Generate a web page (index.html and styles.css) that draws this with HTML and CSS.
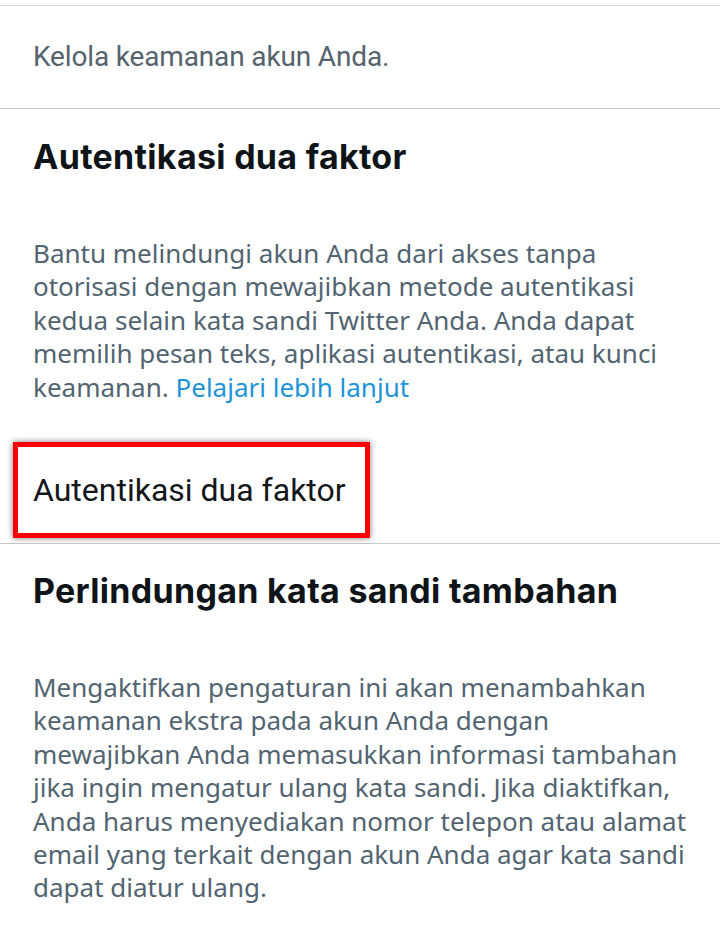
FILE: index.html
```html
<!DOCTYPE html>
<html lang="id">
<head>
<meta charset="utf-8">
<link rel="stylesheet" href="styles.css">
</head>
<body>
<div class="page">
  <div class="intro">
    <p class="intro-text">Kelola keamanan akun Anda.</p>
  </div>
  <section class="section">
    <h2 class="heading">Autentikasi dua faktor</h2>
    <p class="desc">Bantu melindungi akun Anda dari akses tanpa<br>otorisasi dengan mewajibkan metode autentikasi<br>kedua selain kata sandi Twitter Anda. Anda dapat<br>memilih pesan teks, aplikasi autentikasi, atau kunci<br>keamanan. <a class="link" href="#">Pelajari lebih lanjut</a></p>
    <div class="item-row">
      <div class="item-box">Autentikasi dua faktor</div>
    </div>
  </section>
  <section class="section last">
    <h2 class="heading">Perlindungan kata sandi tambahan</h2>
    <p class="desc">Mengaktifkan pengaturan ini akan menambahkan<br>keamanan ekstra pada akun Anda dengan<br>mewajibkan Anda memasukkan informasi tambahan<br>jika ingin mengatur ulang kata sandi. Jika diaktifkan,<br>Anda harus menyediakan nomor telepon atau alamat<br>email yang terkait dengan akun Anda agar kata sandi<br>dapat diatur ulang.</p>
  </section>
</div>
</body>
</html>
```

FILE: styles.css
```css
* { box-sizing: border-box; }
html, body { margin: 0; padding: 0; background: #ffffff; }
body { width: 720px; height: 926px; overflow: hidden; }
.page { padding-top: 5px; }
.intro {
  border-top: 1px solid #d6d6d6;
  border-bottom: 1px solid #c8c8c8;
  height: 104px;
  display: flex;
  align-items: center;
  padding-left: 33px;
}
.intro-text {
  margin: 0;
  font-family: Roboto, "Liberation Sans", sans-serif;
  font-size: 28px;
  line-height: 34px;
  color: #56636d;
  letter-spacing: -0.15px;
}
.section { padding-top: 28px; }
.heading {
  margin: 0;
  padding-left: 33px;
  font-family: Inter, "Noto Sans", sans-serif;
  font-weight: 700;
  font-size: 34px;
  line-height: 40px;
  letter-spacing: 0.3px;
  color: #0f1419;
}
.desc {
  margin: 60px 0 0 0;
  padding: 0 0 0 33px;
  font-family: "Noto Sans", "Open Sans", sans-serif;
  font-size: 26px;
  line-height: 33.4px;
  color: #536471;
  white-space: nowrap;
}
.link { color: #1d93d8; text-decoration: none; }
.item-row {
  margin-top: 38px;
  border-bottom: 1px solid #c8c8c8;
  padding: 0 0 5px 13px;
}
.item-box {
  width: 357px;
  height: 96px;
  border: 5px solid #ff0000;
  box-shadow: 0 0 6px rgba(0,0,0,0.55);
  display: flex;
  align-items: center;
  padding-left: 15px;
  font-family: Roboto, "Liberation Sans", sans-serif;
  font-size: 32px;
  color: #14171a;
}
.section.last { padding-top: 27px; }
```
